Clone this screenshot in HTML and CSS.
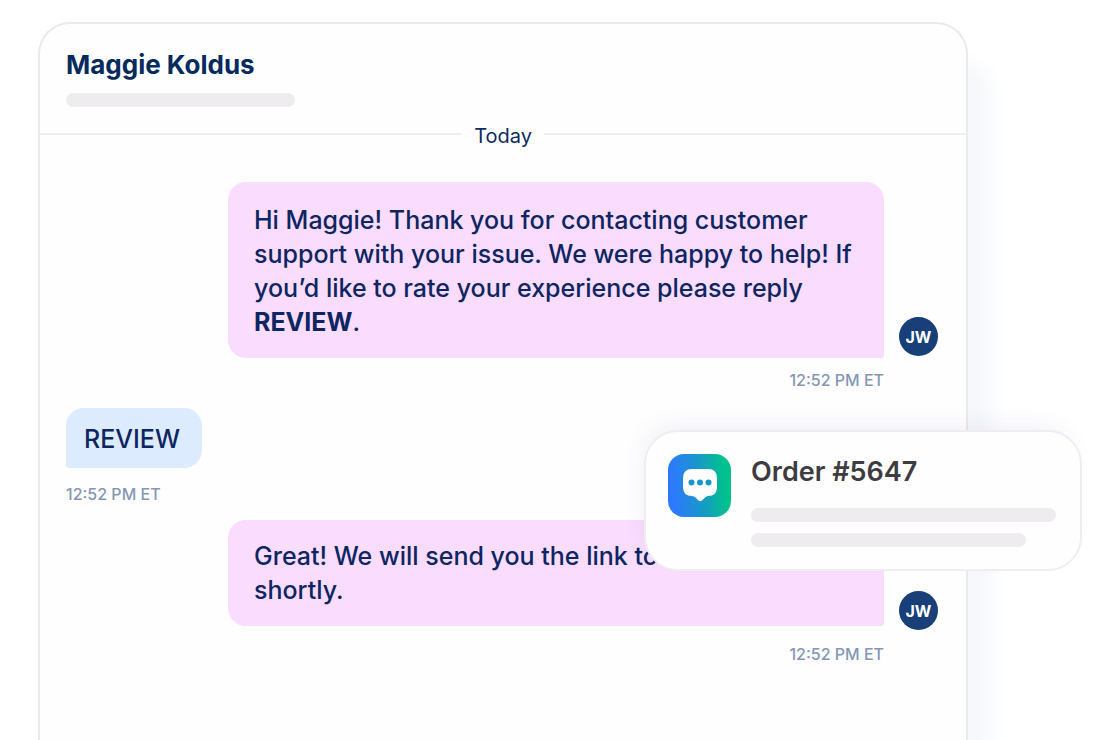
FILE: index.html
```html
<!DOCTYPE html>
<html lang="en">
<head>
<meta charset="utf-8">
<meta name="viewport" content="width=device-width, initial-scale=1">
<title>Maggie Koldus</title>
<link rel="stylesheet" href="styles.css">
</head>
<body>
<div class="stage">
  <main class="panel">
    <header class="panel-head">
      <h1 class="name">Maggie Koldus</h1>
      <div class="bar bar-head"></div>
    </header>
    <div class="day">Today</div>
    <section class="thread">
      <article class="message message-out">
        <div class="row">
          <p class="bubble">Hi Maggie! Thank you for contacting customer<br>support with your issue. We were happy to help! If<br>you’d like to rate your experience please reply<br><strong>REVIEW</strong>.</p>
          <span class="avatar">JW</span>
        </div>
        <time class="time">12:52 PM ET</time>
      </article>
      <article class="message message-in">
        <p class="bubble">REVIEW</p>
        <time class="time">12:52 PM ET</time>
      </article>
      <article class="message message-out message-last">
        <div class="row">
          <p class="bubble">Great! We will send you the link to<br>shortly.</p>
          <span class="avatar">JW</span>
        </div>
        <time class="time">12:52 PM ET</time>
      </article>
    </section>
  </main>
  <aside class="order">
    <svg class="order-icon" viewBox="0 0 63 63" aria-hidden="true">
      <defs>
        <linearGradient id="tile" x1="0" y1="0.55" x2="1" y2="0.45">
          <stop offset="0.05" stop-color="#2e78ff"/>
          <stop offset="0.5" stop-color="#1797cb"/>
          <stop offset="0.9" stop-color="#02c18d"/>
        </linearGradient>
      </defs>
      <rect width="63" height="63" rx="16" fill="url(#tile)"/>
      <path fill="#fff" d="M24 15H40Q49 15 49 24V33Q49 42 40 42Q38.500 42 37 43.500L34 46.500Q32.300 48 30.500 46.500L27.500 43.500Q26 42 24 42Q15 42 15 33V24Q15 15 24 15Z"/>
      <g fill="#1797cb">
        <circle cx="23.500" cy="28.500" r="3"/>
        <circle cx="32" cy="28.500" r="3"/>
        <circle cx="40.500" cy="28.500" r="3"/>
      </g>
    </svg>
    <div class="order-body">
      <h2 class="order-title">Order #5647</h2>
      <div class="bar"></div>
      <div class="bar bar-short"></div>
    </div>
  </aside>
</div>
</body>
</html>
```

FILE: styles.css
```css
* {
  box-sizing: border-box;
}

body {
  margin: 0;
  background: #fff;
  color: #0d2560;
  font-family: Inter, "Liberation Sans", sans-serif;
}

h1,
h2,
p {
  margin: 0;
}

.stage {
  position: relative;
  display: flex;
  min-height: 100vh;
  padding: 22px 150px 0 38px;
  overflow: hidden;
}

.panel {
  flex: 1;
  border: 2px solid #ebe9ed;
  border-bottom: 0;
  border-radius: 32px 32px 0 0;
  background: #fefefe;
  box-shadow: 28px 36px 20px -4px #f6f8fb;
}

.panel-head {
  padding: 25px 26px 17px;
}

.name {
  color: #052a5c;
  font-size: 26px;
  font-weight: 700;
  line-height: 32px;
}

.bar {
  height: 14px;
  border-radius: 7px;
  background: #eeecef;
}

.bar-head {
  width: 229px;
  margin-top: 12px;
}

.day {
  display: flex;
  align-items: center;
  gap: 12px;
  color: #0b2c60;
  font-size: 20px;
  line-height: 24px;
}

.day::before,
.day::after {
  flex: 1;
  height: 2px;
  margin-bottom: 4px;
  background: #efeef0;
  content: "";
}

.thread {
  display: flex;
  flex-direction: column;
  gap: 14px;
  padding: 34px 28px 40px 26px;
}

.message {
  display: flex;
  flex-direction: column;
  gap: 10px;
}

.row {
  display: flex;
  align-items: flex-end;
  justify-content: flex-end;
  gap: 15px;
}

.bubble {
  font-size: 25px;
  font-weight: 500;
  line-height: 34px;
}

.message-out .bubble {
  flex: 0 1 656px;
  padding: 21px 26px 19px;
  border-radius: 18px 18px 3px 18px;
  background: #f9dcfe;
}

.message-last .bubble {
  margin-bottom: 6px;
  padding: 19px 26px;
}

.message-in {
  align-items: flex-start;
  gap: 14px;
  margin-top: 2px;
}

.message-in .bubble {
  min-width: 136px;
  padding: 14px 18px 12px;
  border-radius: 18px 18px 18px 3px;
  background: #dcecfe;
}

.avatar {
  display: grid;
  flex: none;
  place-items: center;
  width: 39px;
  height: 39px;
  margin-bottom: 2px;
  border-radius: 50%;
  background: #193f78;
  color: #fff;
  font-size: 16px;
  font-weight: 700;
}

.time {
  color: #8597b4;
  font-size: 16px;
  font-weight: 500;
  line-height: 24px;
}

.message-out .time {
  align-self: flex-end;
  margin-right: 54px;
}

.order {
  position: absolute;
  top: 430px;
  right: 36px;
  display: flex;
  gap: 20px;
  width: 438px;
  padding: 22px 24px 22px 22px;
  border: 2px solid #efedf1;
  border-radius: 34px;
  background: #fefefe;
  box-shadow: -6px -10px 22px -6px rgba(90, 70, 160, 0.08);
}

.order-icon {
  flex: none;
  width: 63px;
  height: 63px;
}

.order-body {
  flex: 1;
}

.order-title {
  margin-bottom: 18px;
  color: #3e3c41;
  font-size: 27px;
  font-weight: 600;
  line-height: 36px;
}

.bar-short {
  width: 90%;
  margin-top: 11px;
}
```
